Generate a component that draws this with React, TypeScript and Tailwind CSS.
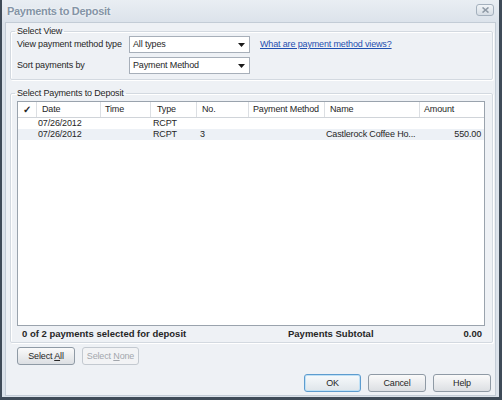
import React from "react";

function Dropdown({ value }: { value: string }) {
  return (
    <div className="w-[121px] h-[17px] border border-[#a7afb9] bg-white flex items-center">
      <span className="flex-1 pl-[3px] leading-none">{value}</span>
      <span className="w-[15px] h-full flex items-center justify-center">
        <svg width="7" height="4" viewBox="0 0 7 4">
          <path d="M0 0 H7 L3.5 4 Z" fill="#1a1a1a" />
        </svg>
      </span>
    </div>
  );
}

function Btn({
  children,
  w,
  disabled,
  focused,
}: {
  children: React.ReactNode;
  w: string;
  disabled?: boolean;
  focused?: boolean;
}) {
  const base =
    "h-[18px] rounded-[3px] flex items-center justify-center leading-none";
  if (disabled)
    return (
      <div
        className={`${base} ${w} border border-[#c3c9d0] bg-[#f2f3f5] text-[#a3a7ad]`}
      >
        {children}
      </div>
    );
  if (focused)
    return (
      <div
        className={`${base} ${w} border border-[#5d9ccf] bg-gradient-to-b from-[#f7fafc] to-[#dfe5ea] shadow-[inset_0_0_0_1px_#bfe0f5]`}
      >
        {children}
      </div>
    );
  return (
    <div
      className={`${base} ${w} border border-[#8f9aa5] bg-gradient-to-b from-[#fafafa] to-[#dcdfe3]`}
    >
      {children}
    </div>
  );
}

export default function App() {
  return (
    <div className="w-[502px] h-[400px] bg-[#dbe2ea] border-l-2 border-r-[3px] border-b-[3px] border-[#3f4b58] flex flex-col font-['Liberation_Sans',Arial,sans-serif] text-[#262626] text-[9px] tracking-[-0.15px] whitespace-nowrap">
      {/* Title bar */}
      <div className="h-[22px] shrink-0 flex items-center justify-between pl-[5px] pr-[5px] bg-gradient-to-b from-[#e9eef3] to-[#dce3eb]">
        <span className="font-bold text-[11px] tracking-[-0.3px] text-[#8494a6] [text-shadow:0_0_3px_#ffffff]">
          Payments to Deposit
        </span>
        <div className="w-[18px] h-[12px] -mt-[2px] rounded-[3px] border border-[#a4b0bd] bg-gradient-to-b from-[#f1f4f7] to-[#d6dde5] flex items-center justify-center">
          <svg width="7" height="6" viewBox="0 0 7 6">
            <path
              d="M0.5 0.5 L6.5 5.5 M6.5 0.5 L0.5 5.5"
              stroke="#8e99a5"
              strokeWidth="1.6"
            />
          </svg>
        </div>
      </div>

      {/* Client area */}
      <div className="flex-1 mx-[3px] mb-[1px] bg-[#eef1f5] border border-[#c3ccd6] flex flex-col pl-[4px] pr-[2px] pt-[2px]">
        {/* Select View */}
        <fieldset className="border border-[#d3d9e0] rounded-[2px] pl-[4px] pr-[6px] pb-[5px] shadow-[inset_1px_1px_0_#ffffff,1px_1px_0_#ffffff]">
          <legend className="px-[2px] leading-[12px]">Select View</legend>
          <div className="flex items-center h-[17px] -mt-[1px]">
            <span className="w-[114px] pl-[2px]">View payment method type</span>
            <Dropdown value="All types" />
            <span className="ml-[10px] text-[#1f4fb0] underline">
              What are payment method views?
            </span>
          </div>
          <div className="flex items-center h-[17px] mt-[4px]">
            <span className="w-[114px] pl-[2px]">Sort payments by</span>
            <Dropdown value="Payment Method" />
          </div>
        </fieldset>

        {/* Select Payments */}
        <fieldset className="mt-[7px] border border-[#d3d9e0] rounded-[2px] pl-[4px] pr-[7px] shadow-[inset_1px_1px_0_#ffffff,1px_1px_0_#ffffff]">
          <legend className="px-[2px] leading-[12px]">
            Select Payments to Deposit
          </legend>
          <div className="ml-[2px] mt-[2px] h-[225px] border border-[#9aa3ad] bg-white flex flex-col">
            <div className="h-[16px] shrink-0 flex border-b border-[#d0d4d9]">
              <div className="w-[19px] border-r border-[#dcdfe3] flex items-center justify-center font-bold text-[10px]">
                ✓
              </div>
              <div className="w-[64px] border-r border-[#dcdfe3] pl-[5px] flex items-center">
                Date
              </div>
              <div className="w-[50px] border-r border-[#dcdfe3] pl-[4px] flex items-center">
                Time
              </div>
              <div className="w-[46px] border-r border-[#dcdfe3] pl-[6px] flex items-center">
                Type
              </div>
              <div className="w-[52px] border-r border-[#dcdfe3] pl-[5px] flex items-center">
                No.
              </div>
              <div className="w-[76px] border-r border-[#dcdfe3] pl-[4px] flex items-center">
                Payment Method
              </div>
              <div className="w-[95px] border-r border-[#dcdfe3] pl-[5px] flex items-center">
                Name
              </div>
              <div className="flex-1 pl-[4px] flex items-center">Amount</div>
            </div>
            <div className="h-[11px] flex items-center leading-none">
              <div className="w-[19px]" />
              <div className="w-[64px] pl-[1px]">07/26/2012</div>
              <div className="w-[50px]" />
              <div className="w-[46px] pl-[2px]">RCPT</div>
              <div className="w-[52px]" />
              <div className="w-[76px]" />
              <div className="w-[95px]" />
              <div className="flex-1" />
            </div>
            <div className="h-[11px] flex items-center leading-none bg-[#edf1f6]">
              <div className="w-[19px]" />
              <div className="w-[64px] pl-[1px]">07/26/2012</div>
              <div className="w-[50px]" />
              <div className="w-[46px] pl-[2px]">RCPT</div>
              <div className="w-[52px] pl-[3px]">3</div>
              <div className="w-[76px]" />
              <div className="w-[95px] pl-[1px]">Castlerock Coffee Ho...</div>
              <div className="flex-1 pr-[3px] text-right">550.00</div>
            </div>
          </div>
          <div className="ml-[2px] h-[16px] flex items-center font-bold text-[9.5px] tracking-normal pl-[5px] pr-[3px]">
            <span className="w-[266px]">0 of 2 payments selected for deposit</span>
            <span className="flex-1">Payments Subtotal</span>
            <span>0.00</span>
          </div>
        </fieldset>

        <div className="flex mt-[4px] ml-[7px] gap-[7px]">
          <Btn w="w-[58px]">
            <span>
              Select <span className="underline">A</span>ll
            </span>
          </Btn>
          <Btn w="w-[57px]" disabled>
            <span>
              Select <span className="underline">N</span>one
            </span>
          </Btn>
        </div>

        <div className="flex justify-end mt-[9px] mr-[2px] gap-[7px]">
          <Btn w="w-[57px]" focused>
            OK
          </Btn>
          <Btn w="w-[58px]">Cancel</Btn>
          <Btn w="w-[58px]">Help</Btn>
        </div>
      </div>
    </div>
  );
}
